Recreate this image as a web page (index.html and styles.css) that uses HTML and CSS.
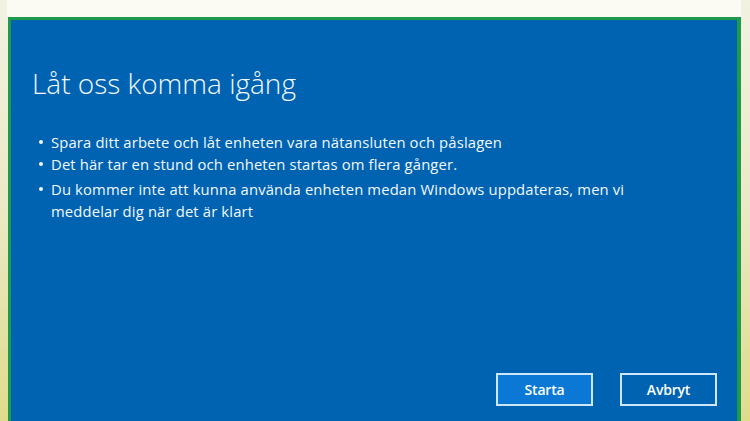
FILE: index.html
```html
<!DOCTYPE html>
<html lang="sv">
<head>
<meta charset="utf-8">
<link rel="stylesheet" href="styles.css">
</head>
<body>
<div class="frame">
  <div class="topband"></div>
  <div class="panel">
    <h1 class="title">Låt oss komma igång</h1>
    <ul class="list">
      <li>Spara ditt arbete och låt enheten vara nätansluten och påslagen</li>
      <li>Det här tar en stund och enheten startas om flera gånger.</li>
      <li class="list-gap">Du kommer inte att kunna använda enheten medan Windows uppdateras, men vi meddelar dig när det är klart</li>
    </ul>
    <div class="spacer"></div>
    <div class="actions">
      <button class="btn btn-primary">Starta</button>
      <button class="btn">Avbryt</button>
    </div>
  </div>
</div>
</body>
</html>
```
FILE: styles.css
```css
html, body {
  margin: 0;
  padding: 0;
  height: 100%;
  overflow: hidden;
}
body {
  background: linear-gradient(to bottom, #f2f2e2 0%, #ebe9c4 50%, #dfdb8c 100%);
  font-family: "Open Sans", "Liberation Sans", sans-serif;
}
.frame {
  margin: 0 9px 0 7px;
  height: 100%;
  display: flex;
  flex-direction: column;
}
.topband {
  height: 17px;
  background: #fbfbf3;
  flex: none;
}
.panel {
  flex: 1;
  margin-left: 1px;
  background: #0063b1;
  border: 3px solid #1d9a4c;
  border-right-width: 4px;
  border-bottom: none;
  padding: 0 20px 0 21px;
  display: flex;
  flex-direction: column;
  color: #f2f8ff;
}
.title {
  margin: 45px 0 0 0;
  font-weight: 300;
  font-size: 28px;
  line-height: 36px;
}
.list {
  margin: 30px 0 0 0;
  padding: 0 0 0 19px;
  font-size: 14.8px;
  letter-spacing: 0.15px;
  line-height: 22px;
  list-style: none;
}
.list li {
  position: relative;
  max-width: 600px;
}
.list .list-gap {
  margin-top: 3px;
}
.list li::before {
  content: "";
  position: absolute;
  left: -12px;
  top: 9px;
  width: 4px;
  height: 4px;
  border-radius: 50%;
  background: #f2f8ff;
}
.spacer {
  flex: 1;
}
.actions {
  display: flex;
  justify-content: flex-end;
  gap: 27px;
  margin-bottom: 15px;
}
.btn {
  width: 97px;
  height: 33px;
  border: 2px solid #cde6fa;
  background: #0063b1;
  color: #ffffff;
  font-family: "Open Sans", "Liberation Sans", sans-serif;
  font-weight: 600;
  font-size: 14px;
  letter-spacing: -0.2px;
  padding: 0;
}
.btn-primary {
  background: #0a78d4;
}
```
